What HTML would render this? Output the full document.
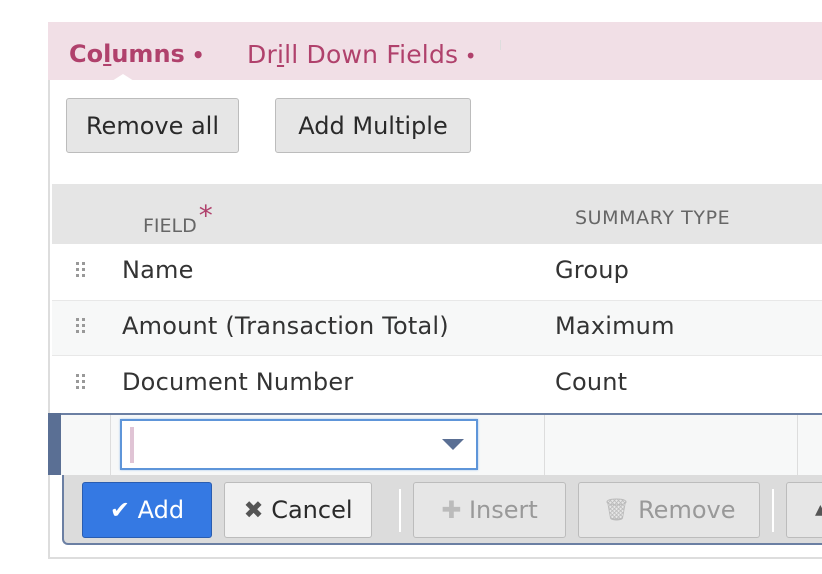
<!DOCTYPE html>
<html><head><style>
*{box-sizing:border-box;margin:0;padding:0}
body{width:822px;height:574px;background:#fff;position:relative;overflow:hidden;font-family:"DejaVu Sans",sans-serif;color:#333}
.a{position:absolute;line-height:1}
.t{font-size:24px;white-space:nowrap;letter-spacing:.2px}
.btn{position:absolute;border:1px solid #bcbcbc;border-radius:3px;background:#e6e6e6;font-size:24px;color:#2a2a2a;display:flex;align-items:center;justify-content:center;white-space:nowrap}
.grip{position:absolute;width:10px;height:18px}
.grip i{position:absolute;width:3px;height:3px;background:#999}
</style></head><body>
<div class="a" style="left:48px;top:22px;width:774px;height:537px;border-left:2px solid #ddd;border-bottom:2px solid #ddd"></div>
<div class="a" style="left:48px;top:22px;width:774px;height:58px;background:#f1dfe6"></div>
<div class="a" style="left:500px;top:40px;width:1px;height:10px;background:#ddd"></div>
<div class="a t" style="left:69px;top:42px;font-weight:bold;color:#b0416c;font-size:24px;letter-spacing:0">Co<u>l</u>umns<span style="font-size:20px"> •</span></div>
<div class="a t" style="left:247px;top:42px;color:#b0416c;font-size:25px;letter-spacing:.2px">Dr<u>i</u>ll Down Fields<span style="font-size:20px"> •</span></div>
<div class="a" style="left:112px;top:74px;width:0;height:0;border-left:11px solid transparent;border-right:11px solid transparent;border-bottom:7px solid #fff"></div>
<div class="btn" style="left:66px;top:98px;width:173px;height:55px">Remove all</div>
<div class="btn" style="left:275px;top:98px;width:196px;height:55px">Add Multiple</div>
<div class="a" style="left:52px;top:184px;width:770px;height:60px;background:#e5e5e5"></div>
<div class="a" style="left:143px;top:209px;font-size:19px;color:#666">FIELD<span style="color:#b0416c;font-size:28px;position:relative;top:-7px;margin-left:2px">*</span></div>
<div class="a" style="left:575px;top:209px;font-size:19px;color:#666;letter-spacing:.6px">SUMMARY TYPE</div>
<div class="a" style="left:52px;top:300px;width:770px;height:56px;background:#f7f8f8;border-top:1px solid #e8e8e8;border-bottom:1px solid #e8e8e8"></div>
<div class="a grip" style="left:76px;top:262px"><i style="left:0;top:0"></i><i style="left:6px;top:0"></i><i style="left:0;top:6px"></i><i style="left:6px;top:6px"></i><i style="left:0;top:12px"></i><i style="left:6px;top:12px"></i></div>
<div class="a t" style="left:122px;top:258px">Name</div><div class="a t" style="left:555px;top:258px">Group</div>
<div class="a grip" style="left:76px;top:318px"><i style="left:0;top:0"></i><i style="left:6px;top:0"></i><i style="left:0;top:6px"></i><i style="left:6px;top:6px"></i><i style="left:0;top:12px"></i><i style="left:6px;top:12px"></i></div>
<div class="a t" style="left:122px;top:314px">Amount (Transaction Total)</div><div class="a t" style="left:555px;top:314px">Maximum</div>
<div class="a grip" style="left:76px;top:374px"><i style="left:0;top:0"></i><i style="left:6px;top:0"></i><i style="left:0;top:6px"></i><i style="left:6px;top:6px"></i><i style="left:0;top:12px"></i><i style="left:6px;top:12px"></i></div>
<div class="a t" style="left:122px;top:370px">Document Number</div><div class="a t" style="left:555px;top:370px">Count</div>
<div class="a" style="left:48px;top:413px;width:774px;height:62px;background:#f7f8f8;border-top:2px solid #6b7fa3"></div>
<div class="a" style="left:48px;top:413px;width:13px;height:62px;background:#5a6f94"></div>
<div class="a" style="left:110px;top:415px;width:1px;height:60px;background:#ddd"></div>
<div class="a" style="left:544px;top:415px;width:1px;height:60px;background:#ddd"></div>
<div class="a" style="left:797px;top:415px;width:1px;height:60px;background:#ddd"></div>
<div class="a" style="left:120px;top:419px;width:358px;height:51px;background:#fff;border:2px solid #5e95d9;box-shadow:0 0 2px #9bc0ee"></div>
<div class="a" style="left:130px;top:427px;width:4px;height:36px;background:#e0c4d5"></div>
<div class="a" style="left:442px;top:439px;width:0;height:0;border-left:11px solid transparent;border-right:11px solid transparent;border-top:11px solid #5a6f94"></div>
<div class="a" style="left:62px;top:475px;width:760px;height:70px;background:#dcdcdc;border:2px solid #6b7fa3;border-top:none;border-right:none;border-radius:0 0 0 6px"></div>
<div class="btn" style="left:82px;top:482px;width:130px;height:56px;background:#3579e3;border-color:#2a5db0;color:#fff">✔&nbsp;Add</div>
<div class="btn" style="left:224px;top:482px;width:148px;height:56px;background:#f2f2f2"><span style="color:#555">✖</span>&nbsp;Cancel</div>
<div class="a" style="left:399px;top:489px;width:2px;height:43px;background:#fff"></div>
<div class="btn" style="left:413px;top:482px;width:153px;height:56px;color:#999"><span style="color:#bbb">✚</span>&nbsp;Insert</div>
<div class="btn" style="left:578px;top:482px;width:182px;height:56px;color:#999"><span style="font-size:22px;color:#bbb">🗑</span>&nbsp;Remove</div>
<div class="a" style="left:772px;top:489px;width:2px;height:43px;background:#fff"></div>
<div class="btn" style="left:786px;top:482px;width:60px;height:56px;color:#555;justify-content:flex-start;padding-left:28px;font-size:14px">▲</div>
</body></html>
